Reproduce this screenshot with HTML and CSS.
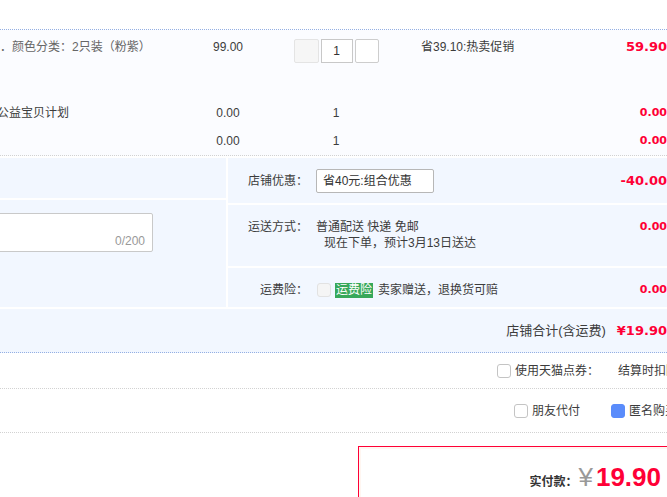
FILE: index.html
```html
<!DOCTYPE html>
<html lang="zh-CN">
<head>
<meta charset="utf-8">
<title>订单确认</title>
<link rel="stylesheet" href="styles.css">
</head>
<body>
<div class="page">
  <div class="top"></div>

  <div class="items">
    <div class="item-row item-main">
      <div class="c-info sku">．颜色分类：2只装（粉紫）</div>
      <div class="c-price">99.00</div>
      <div class="c-qty">
        <div class="qty">
          <span class="qty-btn minus"></span>
          <span class="qty-input">1</span>
          <span class="qty-btn plus"></span>
        </div>
      </div>
      <div class="c-promo">省39.10:热卖促销</div>
      <div class="c-amount amount-lg">59.90</div>
    </div>
    <div class="item-row item-sub">
      <div class="c-info"><span class="clip-left">公益宝贝计划</span></div>
      <div class="c-price">0.00</div>
      <div class="c-qty">1</div>
      <div class="c-promo"></div>
      <div class="c-amount amount-sm">0.00</div>
    </div>
    <div class="item-row item-sub">
      <div class="c-info"></div>
      <div class="c-price">0.00</div>
      <div class="c-qty">1</div>
      <div class="c-promo"></div>
      <div class="c-amount amount-sm">0.00</div>
    </div>
  </div>

  <div class="detail">
    <div class="detail-left">
      <div class="cell"></div>
      <div class="cell note-cell">
        <div class="note">
          <span class="note-count">0/200</span>
        </div>
      </div>
    </div>
    <div class="detail-right">
      <div class="cell drow drow-center">
        <div class="dlabel">店铺优惠：</div>
        <div class="dcontent"><div class="select">省40元:组合优惠</div></div>
        <div class="c-amount amount-lg">-40.00</div>
      </div>
      <div class="cell drow drow-top">
        <div class="dlabel">运送方式：</div>
        <div class="dcontent">
          <div>普通配送 快递 免邮</div>
          <div class="indent">现在下单，预计3月13日送达</div>
        </div>
        <div class="c-amount amount-sm">0.00</div>
      </div>
      <div class="cell drow drow-center drow-low">
        <div class="dlabel">运费险：</div>
        <div class="dcontent ins">
          <span class="box box-disabled"></span>
          <span class="tag">运费险</span>
          <span>卖家赠送，退换货可赔</span>
        </div>
        <div class="c-amount amount-sm">0.00</div>
      </div>
    </div>
  </div>

  <div class="summary">
    <span class="sum-label">店铺合计(含运费)</span>
    <span class="c-amount amount-lg">¥19.90</span>
  </div>

  <div class="opt-row opt-coupon">
    <span class="box"></span>
    <span class="opt-text">使用天猫点券：</span>
    <span class="opt-note">结算时扣除</span>
  </div>
  <div class="opt-row opt-pay">
    <span class="box"></span>
    <span class="opt-text">朋友代付</span>
    <span class="box box-checked"></span>
    <span class="opt-text">匿名购买</span>
  </div>

  <div class="paybox">
    <span class="pay-label">实付款：</span>
    <span class="pay-yen">¥</span>
    <span class="pay-num">19.90</span>
  </div>
</div>
</body>
</html>
```

FILE: styles.css
```css
html, body {
  margin: 0;
  padding: 0;
}
body {
  width: 667px;
  height: 497px;
  overflow: hidden;
  background: #fff;
  color: #3c3c3c;
  font-family: "Liberation Sans", "Noto Sans CJK SC", sans-serif;
  font-size: 12px;
  line-height: 16px;
}
.page {
  width: 667px;
  white-space: nowrap;
}
.top {
  height: 29px;
  border-bottom: 1px dotted #94afe3;
}

/* items */
.items {
  background: #fbfcff;
  border-bottom: 1px dotted #d2d2d2;
}
.item-row {
  display: grid;
  grid-template-columns: 180px 96px 120px 164px 107px;
}
.item-main {
  height: 69px;
  align-items: start;
}
.item-main > div {
  padding-top: 9px;
  line-height: 16px;
}
.item-sub {
  height: 28px;
  line-height: 28px;
}
.sku {
  color: #666;
}
.clip-left {
  display: inline-block;
  margin-left: -3px;
}
.c-price,
.c-qty {
  text-align: center;
}
.c-promo {
  padding-left: 25px;
}
.c-amount {
  text-align: right;
  color: #ff0036;
  font-family: "DejaVu Sans", "Liberation Sans", sans-serif;
  font-weight: bold;
}
.amount-lg {
  font-size: 13px;
}
.amount-sm {
  font-size: 11px;
}

.qty {
  display: flex;
  justify-content: center;
  gap: 2px;
}
.qty-btn {
  display: block;
  width: 22px;
  height: 22px;
  border: 1px solid #cdcdcd;
  border-radius: 2px;
  background: #fff;
}
.qty-btn.minus {
  width: 23px;
  background: #f6f6f6;
  border-color: #e4e4e4;
}
.qty-input {
  display: block;
  width: 30px;
  height: 22px;
  line-height: 22px;
  border: 1px solid #c8c8c8;
  background: #fff;
  text-align: center;
  color: #333;
}

/* detail */
.detail {
  display: grid;
  grid-template-columns: 226px 439px;
  column-gap: 2px;
  margin-top: 2px;
}
.cell {
  background: #f2f7ff;
}
.detail-left {
  display: grid;
  grid-template-rows: 40px 107px;
  row-gap: 2px;
}
.note-cell {
  padding-top: 13px;
}
.note {
  width: 191px;
  height: 34px;
  margin-left: -47px;
  border: 1px solid #c9c9c9;
  border-radius: 2px;
  background: #fff;
  display: flex;
  justify-content: flex-end;
  align-items: flex-end;
  padding: 0 7px 3px 0;
}
.note-count {
  color: #999;
  font-size: 12px;
  line-height: 14px;
}
.detail-right {
  display: grid;
  grid-template-rows: 45px 61px 39px;
  row-gap: 2px;
}
.drow {
  display: grid;
  grid-template-columns: 80px 1fr auto;
}
.drow-center {
  align-items: center;
}
.drow-top {
  align-items: start;
  padding-top: 14px;
}
.drow-low {
  padding-top: 5px;
}
.dlabel {
  text-align: right;
}
.dcontent {
  padding-left: 8px;
}
.indent {
  padding-left: 8px;
}
.select {
  width: 110px;
  height: 22px;
  line-height: 22px;
  padding-left: 6px;
  border: 1px solid #b7b7b7;
  border-radius: 2px;
  background: #fff;
  color: #333;
}
.ins {
  display: flex;
  align-items: center;
  padding-left: 9px;
}
.ins > * {
  flex-shrink: 0;
}
.tag {
  margin-left: 4px;
  margin-right: 5px;
  padding: 0 1px;
  background: #37a85a;
  color: #fff;
  line-height: 15px;
}

/* summary */
.summary {
  margin-top: 2px;
  height: 43px;
  background: #f2f7ff;
  border-bottom: 1px dotted #94afe3;
  display: flex;
  justify-content: flex-end;
  align-items: center;
  gap: 11px;
}
.sum-label {
  font-size: 13px;
}

/* options */
.box {
  display: block;
  flex-shrink: 0;
  width: 12px;
  height: 12px;
  border: 1px solid #c4c4c4;
  border-radius: 3px;
  background: #fff;
}
.box-disabled {
  background: #f5f5f5;
  border-color: #e2e2e2;
}
.box-checked {
  background: #5a8cfb;
  border-color: #5a8cfb;
}
.opt-row {
  display: flex;
  align-items: center;
  border-bottom: 1px dotted #d2d2d2;
}
.opt-row > * {
  flex-shrink: 0;
}
.opt-row .opt-text {
  margin-left: 4px;
}
.opt-coupon {
  height: 34px;
  padding-top: 1px;
  padding-left: 497px;
}
.opt-note {
  margin-left: 19px;
}
.opt-pay {
  height: 43px;
  padding-left: 514px;
}
.opt-pay .box-checked {
  margin-left: 31px;
}

/* pay box */
.paybox {
  margin-top: 13px;
  margin-left: 358px;
  width: 302px;
  height: 60px;
  border: 1px solid #ff0036;
  padding: 15px 15px 0 0;
  display: flex;
  justify-content: flex-end;
  align-items: baseline;
  box-shadow: inset 0 0 0 2px #fff6f1;
}
.pay-label {
  font-weight: bold;
  color: #333;
  font-size: 12px;
}
.pay-yen {
  font-size: 26px;
  line-height: 30px;
  color: #999;
  margin-left: 1px;
}
.pay-num {
  font-size: 26px;
  line-height: 30px;
  font-weight: bold;
  color: #ff0036;
  margin-left: 3px;
}
```
